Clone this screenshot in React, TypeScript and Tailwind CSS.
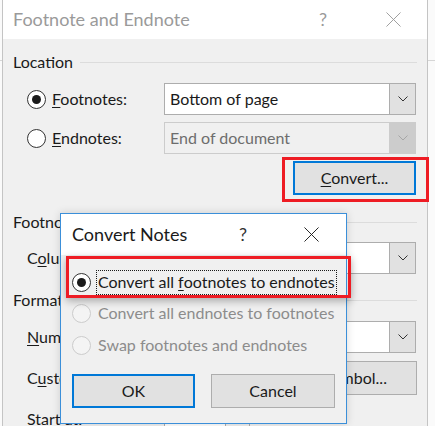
import React from "react"

const font = "font-['Segoe_UI','Lato','Liberation_Sans',sans-serif]"

const Chevron = ({ color = "#333" }: { color?: string }) => (
    <svg width="10" height="6" viewBox="0 0 10 6" fill="none">
        <polyline points="0.5,0.5 5,5 9.5,0.5" stroke={color} strokeWidth="1" />
    </svg>
)

const CloseIcon = ({ color, size }: { color: string; size: number }) => (
    <svg width={size} height={size} viewBox="0 0 16 16" fill="none">
        <line x1="0.5" y1="0.5" x2="15.5" y2="15.5" stroke={color} strokeWidth="1" />
        <line x1="15.5" y1="0.5" x2="0.5" y2="15.5" stroke={color} strokeWidth="1" />
    </svg>
)

const Radio = ({ checked, disabled }: { checked?: boolean; disabled?: boolean }) => (
    <span
        className={
            "flex h-[19px] w-[19px] shrink-0 items-center justify-center rounded-full border " +
            (disabled ? "border-[#cccccc] bg-[#f4f4f4]" : "border-[#333333] bg-white")
        }
    >
        {checked && <span className="h-[9px] w-[9px] rounded-full bg-[#1a1a1a]" />}
    </span>
)

const Select = ({ value, disabled }: { value?: string; disabled?: boolean }) => (
    <div
        className={
            "flex h-[32px] w-[252px] border " +
            (disabled ? "border-[#cccccc] bg-[#f0f0f0]" : "border-[#adadad] bg-white")
        }
    >
        <div
            className={
                "flex flex-1 items-center pl-[5px] text-[16px] " +
                (disabled ? "text-[#6d6d6d]" : "text-[#1a1a1a]")
            }
        >
            {value}
        </div>
        <div
            className={
                "flex w-[26px] items-center justify-center border-l " +
                (disabled ? "border-[#cccccc] bg-[#cccccc]" : "border-[#adadad] bg-[#e1e1e1]")
            }
        >
            <Chevron color={disabled ? "#a6a6a6" : "#333"} />
        </div>
    </div>
)

const SectionHeader = ({ children }: { children: React.ReactNode }) => (
    <div className="flex h-[20px] items-center gap-[7px]">
        <span className="text-[16px] text-[#1a1a1a]">{children}</span>
        <span className="h-px flex-1 bg-[#dcdcdc]" />
    </div>
)

export default function App() {
    return (
        <div className={"relative h-[426px] w-[435px] overflow-hidden bg-[#fafafa] " + font}>
            {/* background window behind the dialog */}
            <div className="absolute left-0 right-0 top-[60px] h-px bg-[#d6d6d6]" />

            {/* Footnote and Endnote dialog */}
            <div className="relative ml-[2px] h-[426px] w-[426px] border-x border-[#c4c4c4] bg-[#f0f0f0]">
                <div className="flex h-[39px] items-center bg-white pl-[10px]">
                    <span className="flex-1 text-[18px] text-[#9a9a9a]">Footnote and Endnote</span>
                    <span className="w-[20px] text-center text-[18px] text-[#9a9a9a]">?</span>
                    <span className="ml-[53px] mr-[26px] flex">
                        <CloseIcon color="#9a9a9a" size={15} />
                    </span>
                </div>

                <div className="pl-[10px] pr-[10px] pt-[13px]">
                    <SectionHeader>Location</SectionHeader>

                    <div className="mt-[11px] flex h-[32px] items-center pl-[14px]">
                        <div className="flex w-[137px] items-center gap-[6px]">
                            <Radio checked />
                            <span className="text-[16px] text-[#1a1a1a]">
                                <span className="underline underline-offset-2">F</span>ootnotes:
                            </span>
                        </div>
                        <Select value="Bottom of page" />
                    </div>

                    <div className="mt-[7px] flex h-[32px] items-center pl-[14px]">
                        <div className="flex w-[137px] items-center gap-[6px]">
                            <Radio />
                            <span className="text-[16px] text-[#1a1a1a]">
                                <span className="underline underline-offset-2">E</span>ndnotes:
                            </span>
                        </div>
                        <Select value="End of document" disabled />
                    </div>

                    <div className="mt-[7px] flex justify-end pr-[1px]">
                        <button className="flex h-[34px] w-[123px] items-center justify-center border-2 border-[#0078d7] bg-[#e1e1e1] text-[16px] text-[#1a1a1a]">
                            <span>
                                <span className="underline underline-offset-2">C</span>onvert...
                            </span>
                        </button>
                    </div>

                    <div className="mt-[17px]">
                        <SectionHeader>Footnote layout</SectionHeader>
                    </div>

                    <div className="mt-[10px] flex h-[32px] items-center pl-[14px]">
                        <span className="w-[137px] text-[16px] text-[#1a1a1a]">
                            C<span className="underline underline-offset-2">o</span>lumns:
                        </span>
                        <Select value="Match section layout" />
                    </div>

                    <div className="mt-[16px]">
                        <SectionHeader>Format</SectionHeader>
                    </div>

                    <div className="mt-[11px] flex h-[32px] items-center pl-[14px]">
                        <span className="w-[137px] text-[16px] text-[#1a1a1a]">
                            <span className="underline underline-offset-2">N</span>umber format:
                        </span>
                        <Select value="1, 2, 3, ..." />
                    </div>

                    <div className="mt-[8px] flex h-[34px] items-center pl-[14px]">
                        <span className="w-[137px] text-[16px] text-[#1a1a1a]">
                            C<span className="underline underline-offset-2">u</span>stom mark:
                        </span>
                        <div className="h-[32px] w-[120px] border border-[#adadad] bg-white" />
                        <button className="ml-[10px] flex h-[34px] flex-1 items-center justify-center border border-[#adadad] bg-[#e1e1e1] text-[16px] text-[#1a1a1a]">
                            Symbol...
                        </button>
                    </div>

                    <div className="mt-[8px] flex h-[32px] items-center pl-[14px]">
                        <span className="w-[137px] text-[16px] text-[#1a1a1a]">
                            <span className="underline underline-offset-2">S</span>tart at:
                        </span>
                        <div className="flex h-[32px] w-[86px] border border-[#adadad] bg-white">
                            <span className="flex-1 pl-[5px] text-[16px]">1</span>
                            <span className="flex w-[24px] items-start justify-center border-l border-[#adadad] bg-[#f0f0f0] pt-[3px] text-[9px] text-[#1a1a1a]">
                                ▲
                            </span>
                        </div>
                    </div>
                </div>
            </div>

            {/* annotation around Convert... */}
            <div className="absolute left-[282px] top-[157px] h-[45px] w-[147px] border-[3px] border-[#ee1c24]" />

            {/* Convert Notes dialog */}
            <div className="absolute left-[60px] top-[213px] h-[211px] w-[287px] border border-[#3b8fd9] bg-[#f0f0f0] shadow-[0_0_8px_rgba(0,0,0,0.15)]">
                <div className="flex h-[41px] items-center bg-white pl-[11px]">
                    <span className="flex-1 text-[18px] text-[#1a1a1a]">Convert Notes</span>
                    <span className="w-[20px] text-center text-[18px] text-[#333]">?</span>
                    <span className="ml-[51px] mr-[27px] flex">
                        <CloseIcon color="#1a1a1a" size={15} />
                    </span>
                </div>

                <div className="flex flex-col pl-[11px] pt-[14px]">
                    <div className="flex h-[26px] items-center gap-[5px]">
                        <Radio checked />
                        <span className="flex h-[25px] items-center border border-dotted border-[#1a1a1a] px-[1px] text-[16px] text-[#1a1a1a]">
                            Convert all&nbsp;<span className="underline underline-offset-2">f</span>ootnotes to endnotes
                        </span>
                    </div>
                    <div className="mt-[5px] flex h-[26px] items-center gap-[7px]">
                        <Radio disabled />
                        <span className="text-[16px] text-[#8c8c8c]">Convert all endnotes to footnotes</span>
                    </div>
                    <div className="mt-[6px] flex h-[26px] items-center gap-[7px]">
                        <Radio disabled />
                        <span className="text-[16px] text-[#8c8c8c]">Swap footnotes and endnotes</span>
                    </div>

                    <div className="mt-[16px] flex gap-[16px]">
                        <button className="flex h-[34px] w-[123px] items-center justify-center border-2 border-[#0078d7] bg-[#e1e1e1] text-[16px] text-[#1a1a1a]">
                            OK
                        </button>
                        <button className="flex h-[34px] w-[124px] items-center justify-center border border-[#adadad] bg-[#e1e1e1] text-[16px] text-[#1a1a1a]">
                            Cancel
                        </button>
                    </div>
                </div>
            </div>

            {/* annotation around first option */}
            <div className="absolute left-[66px] top-[256px] h-[42px] w-[285px] border-[3px] border-[#ee1c24] shadow-[0_3px_8px_rgba(0,0,0,0.3)]" />
        </div>
    )
}
